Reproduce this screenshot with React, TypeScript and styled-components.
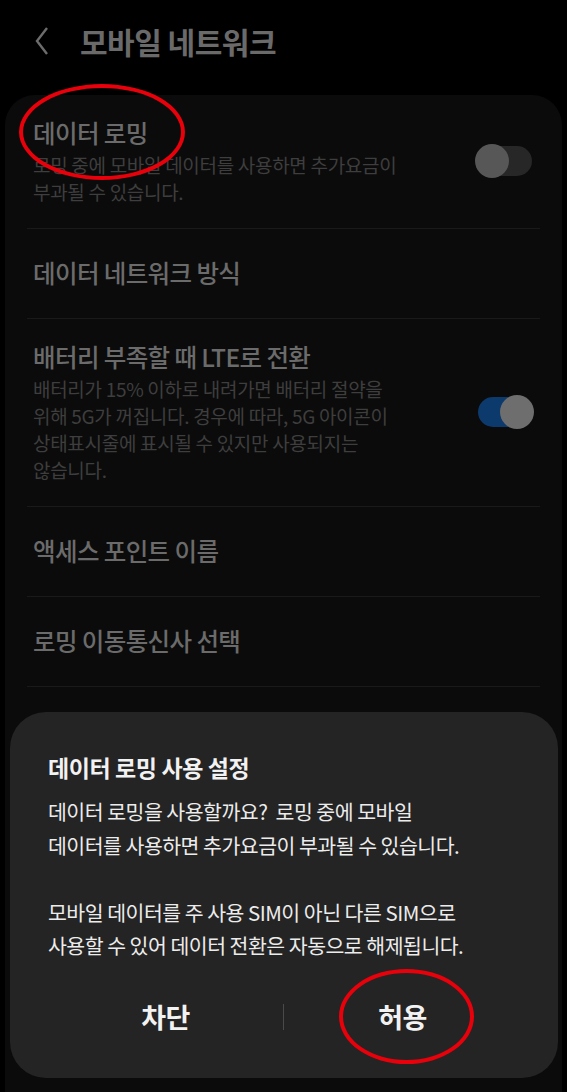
import React from 'react';
import styled, { createGlobalStyle } from 'styled-components';

const GlobalStyle = createGlobalStyle`
  html, body {
    margin: 0;
    padding: 0;
    background: #000;
  }
  body {
    font-family: "Noto Sans CJK KR", "Noto Sans", sans-serif;
    -webkit-font-smoothing: antialiased;
  }
`;

type Setting = {
  title: string;
  lines?: string[];
  toggle?: 'on' | 'off';
  ringed?: boolean;
};

const settings: Setting[] = [
  {
    title: '데이터 로밍',
    lines: ['로밍 중에 모바일 데이터를 사용하면 추가요금이', '부과될 수 있습니다.'],
    toggle: 'off',
    ringed: true,
  },
  { title: '데이터 네트워크 방식' },
  {
    title: '배터리 부족할 때 LTE로 전환',
    lines: [
      '배터리가 15% 이하로 내려가면 배터리 절약을',
      '위해 5G가 꺼집니다. 경우에 따라, 5G 아이콘이',
      '상태표시줄에 표시될 수 있지만 사용되지는',
      '않습니다.',
    ],
    toggle: 'on',
  },
  { title: '액세스 포인트 이름' },
  { title: '로밍 이동통신사 선택' },
];

const App = () => {
  return (
    <>
      <GlobalStyle />
      <Screen>
        <Header>
          <BackButton>
            <svg width="16" height="30" viewBox="0 0 16 30">
              <polyline points="13,2 3,15 13,28" fill="none" stroke="#6c6c6c" strokeWidth="2.4" />
            </svg>
          </BackButton>
          <HeaderTitle>모바일 네트워크</HeaderTitle>
        </Header>

        <Panel>
          {settings.map((s) => (
            <Item key={s.title} tall={!!s.lines}>
              <ItemText>
                <ItemTitle>
                  {s.title}
                  {s.ringed && <TitleRing />}
                </ItemTitle>
                {s.lines && (
                  <ItemSub>
                    {s.lines.map((l) => (
                      <div key={l}>{l}</div>
                    ))}
                  </ItemSub>
                )}
              </ItemText>
              {s.toggle && (
                <Switch on={s.toggle === 'on'}>
                  <Thumb on={s.toggle === 'on'} />
                </Switch>
              )}
            </Item>
          ))}
        </Panel>

        <Dialog>
          <DialogTitle>데이터 로밍 사용 설정</DialogTitle>
          <DialogBody>
            <div>데이터 로밍을 사용할까요?&nbsp; 로밍 중에 모바일</div>
            <div>데이터를 사용하면 추가요금이 부과될 수 있습니다.</div>
            <div>&nbsp;</div>
            <div>모바일 데이터를 주 사용 SIM이 아닌 다른 SIM으로</div>
            <div>사용할 수 있어 데이터 전환은 자동으로 해제됩니다.</div>
          </DialogBody>
          <Buttons>
            <DialogButton>차단</DialogButton>
            <ButtonDivider />
            <DialogButton>
              허용
              <ButtonRing />
            </DialogButton>
          </Buttons>
        </Dialog>
      </Screen>
    </>
  );
};

export default App;

const Screen = styled.div`
  width: 567px;
  height: 1092px;
  background: #000;
  overflow: hidden;
  display: flex;
  flex-direction: column;
  position: relative;
`;

const Header = styled.div`
  height: 95px;
  display: flex;
  align-items: center;
  padding: 0 0 13px 34px;
  box-sizing: border-box;
  gap: 30px;
`;

const BackButton = styled.div`
  width: 16px;
  height: 30px;
  display: flex;
`;

const HeaderTitle = styled.div`
  font-size: 30px;
  font-weight: 700;
  color: #6a6a6a;
  letter-spacing: -0.5px;
`;

const Panel = styled.div`
  flex: 1;
  margin: 0 5px;
  background: #0b0b0b;
  border-radius: 30px 30px 0 0;
  display: flex;
  flex-direction: column;
`;

const Item = styled.div<{ tall: boolean }>`
  margin: 0 22px;
  padding: ${({ tall }) => (tall ? '21px 8px 23px 6px' : '27px 8px 28px 6px')};
  border-bottom: 1px solid #1a1a1a;
  display: flex;
  align-items: center;
  justify-content: space-between;
`;

const ItemText = styled.div`
  display: flex;
  flex-direction: column;
`;

const ItemTitle = styled.div`
  position: relative;
  align-self: flex-start;
  font-size: 24.5px;
  line-height: 34px;
  font-weight: 500;
  color: #6b6b6b;
  letter-spacing: -0.6px;
`;

const TitleRing = styled.span`
  position: absolute;
  left: -14px;
  top: -32px;
  width: 158px;
  height: 88px;
  border: 4px solid #e8000b;
  border-radius: 50%;
`;

const ItemSub = styled.div`
  margin-top: 1px;
  font-size: 19px;
  line-height: 27px;
  color: #3e3e3e;
  letter-spacing: -0.3px;
`;

const Switch = styled.div<{ on: boolean }>`
  position: relative;
  width: 54px;
  height: 30px;
  border-radius: 15px;
  background: ${({ on }) => (on ? '#0c3a6c' : '#272727')};
  flex-shrink: 0;
`;

const Thumb = styled.span<{ on: boolean }>`
  position: absolute;
  top: -2px;
  left: ${({ on }) => (on ? '22px' : '-3px')};
  width: 34px;
  height: 34px;
  border-radius: 50%;
  background: ${({ on }) => (on ? '#6e6e6e' : '#575757')};
`;

const Dialog = styled.div`
  position: absolute;
  left: 10px;
  right: 9px;
  bottom: 14px;
  height: 366px;
  box-sizing: border-box;
  background: #242424;
  border-radius: 36px;
  padding: 38px 38px 0 38px;
  display: flex;
  flex-direction: column;
`;

const DialogTitle = styled.div`
  font-size: 23px;
  line-height: 34px;
  font-weight: 700;
  color: #f2f2f2;
  letter-spacing: -0.4px;
`;

const DialogBody = styled.div`
  margin-top: 11px;
  font-size: 20.5px;
  line-height: 33.5px;
  color: #ececec;
  letter-spacing: -0.5px;
  white-space: nowrap;
`;

const Buttons = styled.div`
  margin-top: 27px;
  height: 54px;
  display: grid;
  grid-template-columns: 1fr 2px 1fr;
  align-items: center;
`;

const DialogButton = styled.div`
  position: relative;
  justify-self: center;
  font-size: 27px;
  font-weight: 700;
  color: #f2f2f2;
  letter-spacing: -0.5px;
`;

const ButtonDivider = styled.div`
  width: 1px;
  height: 26px;
  background: #4a4a4a;
`;

const ButtonRing = styled.span`
  position: absolute;
  left: -39px;
  top: -28px;
  width: 127px;
  height: 87px;
  border: 4px solid #e8000b;
  border-radius: 50%;
`;
